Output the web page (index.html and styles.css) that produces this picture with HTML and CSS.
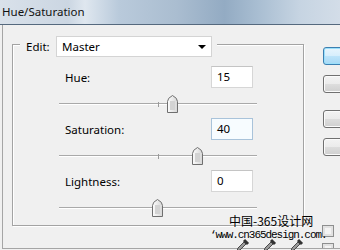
FILE: index.html
```html
<!DOCTYPE html>
<html lang="en">
<head>
  <meta charset="UTF-8" />
  <meta name="viewport" content="width=device-width, initial-scale=1" />
  <title>Hue/Saturation</title>
  <link rel="stylesheet" href="styles.css">
</head>
<body>
  <div class="titlebar">Hue/Saturation</div>

  <div class="client">
    <div class="group">
      <div class="edit-row">
        <span class="edit-label">Edit:</span>
        <div class="select">
          <span>Master</span>
          <span class="arrow"></span>
        </div>
      </div>

      <div class="section first">
        <div class="field">
          <span>Hue:</span>
          <div class="input">15</div>
        </div>
        <div class="slider">
          <div class="track"><span class="tick"></span></div>
          <svg class="thumb" style="left: 108px" width="11" height="18" viewBox="0 0 11 18">
            <defs>
              <linearGradient id="tg" x1="0" y1="0" x2="1" y2="0">
                <stop offset="0" stop-color="#fdfdfd"/>
                <stop offset="1" stop-color="#d6d6d6"/>
              </linearGradient>
            </defs>
            <path d="M0.5 17.5 V6.5 Q0.5 3 5.5 0.5 Q10.5 3 10.5 6.5 V17.5 Z" fill="url(#tg)" stroke="#6f6f6f"/>
            <rect x="3" y="6" width="5" height="9" fill="#d3d3d3"/>
          </svg>
        </div>
      </div>

      <div class="section">
        <div class="field">
          <span>Saturation:</span>
          <div class="input focus">40</div>
        </div>
        <div class="slider">
          <div class="track"><span class="tick"></span></div>
          <svg class="thumb" style="left: 133px" width="11" height="18" viewBox="0 0 11 18">
            <path d="M0.5 17.5 V6.5 Q0.5 3 5.5 0.5 Q10.5 3 10.5 6.5 V17.5 Z" fill="url(#tg)" stroke="#6f6f6f"/>
            <rect x="3" y="6" width="5" height="9" fill="#d3d3d3"/>
          </svg>
        </div>
      </div>

      <div class="section">
        <div class="field">
          <span>Lightness:</span>
          <div class="input">0</div>
        </div>
        <div class="slider">
          <div class="track"><span class="tick"></span></div>
          <svg class="thumb" style="left: 93px" width="11" height="18" viewBox="0 0 11 18">
            <path d="M0.5 17.5 V6.5 Q0.5 3 5.5 0.5 Q10.5 3 10.5 6.5 V17.5 Z" fill="url(#tg)" stroke="#6f6f6f"/>
            <rect x="3" y="6" width="5" height="9" fill="#d3d3d3"/>
          </svg>
        </div>
      </div>
    </div>

    <div class="buttons">
      <div class="btn default"></div>
      <div class="btn"></div>
      <div class="btn spaced"></div>
      <div class="btn"></div>
      <div class="check"></div>
      <div class="check"></div>
    </div>
  </div>

  <!-- пипетки -->
  <div class="droppers">
    <svg width="14" height="12" viewBox="0 0 14 12"><path d="M1 13 L2 10 L8 4 L10 6 L4 12 Z" fill="#9a9a9a" stroke="#4a4a4a"/><path d="M8 2 L12 6" stroke="#333" stroke-width="3"/></svg>
    <svg width="14" height="12" viewBox="0 0 14 12"><path d="M1 13 L2 10 L8 4 L10 6 L4 12 Z" fill="#9a9a9a" stroke="#4a4a4a"/><path d="M8 2 L12 6" stroke="#333" stroke-width="3"/></svg>
    <svg width="14" height="12" viewBox="0 0 14 12"><path d="M1 13 L2 10 L8 4 L10 6 L4 12 Z" fill="#9a9a9a" stroke="#4a4a4a"/><path d="M8 2 L12 6" stroke="#333" stroke-width="3"/></svg>
  </div>

  <div class="watermark">
    <div class="wm-cn">中国-365设计网</div>
    <div class="wm-url">‘www.cn365design.com.</div>
  </div>
</body>
</html>
```

FILE: styles.css
```css
body {
  margin: 0;
  width: 340px;
  height: 250px;
  overflow: hidden;
  position: relative;
  background: #f0f0f0;
  font-family: "Noto Sans", "DejaVu Sans", sans-serif;
  font-size: 11.5px;
  color: #000;
}

.titlebar {
  height: 24px;
  line-height: 23px;
  padding-left: 2px;
  border-bottom: 1px solid #55697e;
  background: linear-gradient(to right, #d9e1ea 0, #cbd6e2 20%, #dfe7ef 25%, #b9cadb 35%, #aabdd0 52%, #93abc3 66%, #a9bed2 76%, #c6d4e2 88%, #d3dde8 100%);
  color: #111;
}

.client {
  display: flex;
  align-items: flex-start;
  height: 223px;
  margin-left: 2px;
  overflow: hidden;
  border-left: 1px solid #a5a5a5;
  border-bottom: 1px solid #a5a5a5;
}

/* рамка группы */
.group {
  flex-shrink: 0;
  width: 290px;
  margin: 19px 0 0 9px;
  padding-bottom: 3px;
  border: 1px solid #a3a3a3;
  box-shadow: 1px 1px 0 #fff, inset 1px 1px 0 #fff;
}

.edit-row {
  display: flex;
  align-items: center;
  width: fit-content;
  margin: -9px 0 0 7px;
  padding: 0 5px 0 6px;
  background: #f0f0f0;
}

.edit-label {
  width: 30px;
}

.select {
  display: flex;
  align-items: center;
  justify-content: space-between;
  box-sizing: border-box;
  width: 156px;
  height: 21px;
  padding: 0 5px;
  background: #fff;
  border: 1px solid #d4d4d4;
}

.arrow {
  width: 0;
  height: 0;
  border-left: 4px solid transparent;
  border-right: 4px solid transparent;
  border-top: 4px solid #000;
}

.section {
  padding-left: 46px;
}

.section.first {
  margin-top: 9px;
}

.field {
  display: flex;
  align-items: center;
  justify-content: space-between;
  box-sizing: border-box;
  width: 194px;
  height: 22px;
  padding-left: 6px;
}

.input {
  box-sizing: border-box;
  width: 42px;
  height: 22px;
  padding-left: 5px;
  line-height: 20px;
  background: #fff;
  border: 1px solid #d6d6d6;
  border-top-color: #c4c4c4;
}

.input.focus {
  background: #f7fcff;
  border-color: #a9c3da;
}

.slider {
  position: relative;
  box-sizing: border-box;
  width: 198px;
  height: 30px;
  padding-top: 15px;
}

.track {
  position: relative;
  height: 1px;
  background: #a9a9a9;
  border-bottom: 1px solid #fff;
}

.tick {
  position: absolute;
  left: 99px;
  top: -1px;
  width: 1px;
  height: 5px;
  background: #9a9a9a;
}

.thumb {
  position: absolute;
  top: 7px;
  display: block;
}

.buttons {
  flex-shrink: 0;
  display: flex;
  flex-direction: column;
  margin: 22px 0 0 19px;
}

.btn {
  box-sizing: border-box;
  width: 80px;
  height: 18px;
  margin-bottom: 10px;
  border: 1px solid #707070;
  border-radius: 3px;
  background: linear-gradient(to bottom, #f3f3f3 0, #ebebeb 50%, #dddddd 51%, #cfcfcf 100%);
  box-shadow: inset 0 0 0 1px #fbfbfb;
}

.btn.default {
  border-color: #3c7fb1;
  background: linear-gradient(to bottom, #e8f5fd 0, #d6eefc 50%, #bde4fa 51%, #a7d9f5 100%);
  box-shadow: inset 0 0 0 1px #9be0fb;
}

.btn.spaced {
  margin-top: 7px;
}

.check {
  box-sizing: border-box;
  width: 12px;
  height: 12px;
  margin: 59px 0 0 -1px;
  border: 1px solid #8e8f8f;
  background: #f4f4f4;
  box-shadow: inset 0 0 0 2px #e2e2e2;
}

.check + .check {
  margin-top: 6px;
}

.droppers {
  position: absolute;
  left: 236px;
  top: 238px;
  display: flex;
  gap: 13px;
}

.watermark {
  position: absolute;
  left: 210px;
  top: 213px;
}

.wm-cn {
  margin-left: 19px;
  font-family: "Noto Sans CJK SC", sans-serif;
  font-size: 12px;
  line-height: 16px;
}

.wm-url {
  font-family: "Liberation Mono", monospace;
  font-size: 11px;
  letter-spacing: -1.05px;
  line-height: 12px;
}
```
